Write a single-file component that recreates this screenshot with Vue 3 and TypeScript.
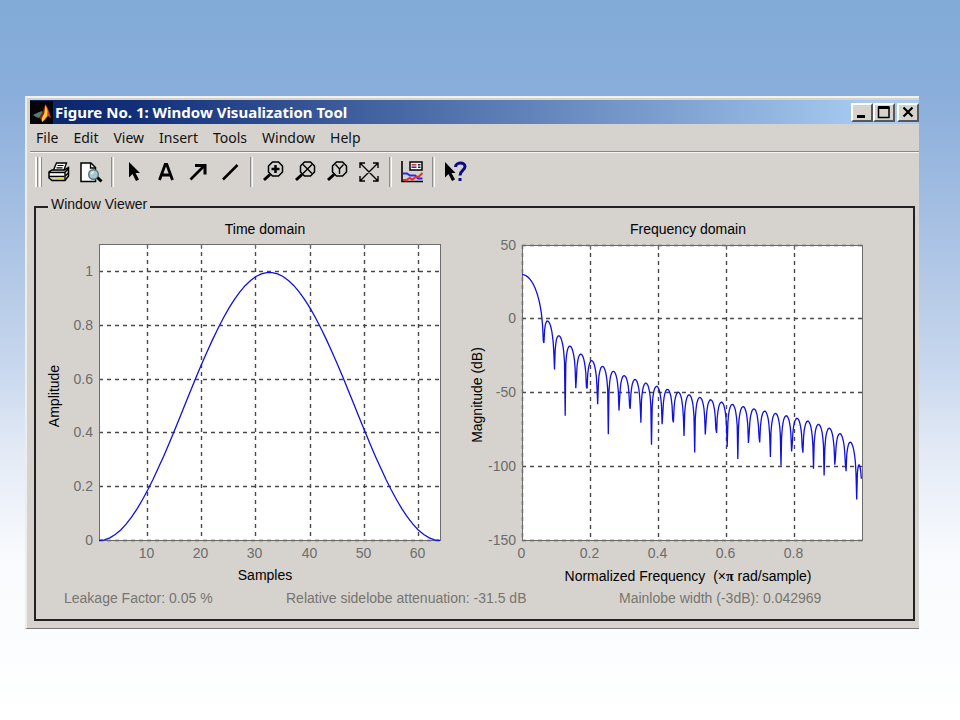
<script setup lang="ts">
interface Tick {
  label: string
  pos: number
}

const menus: string[] = ['File', 'Edit', 'View', 'Insert', 'Tools', 'Window', 'Help']

// Plot frames, in viewBox units
const time = { left: 99, right: 440, top: 244, bottom: 540 }
const freq = { left: 522, right: 862, top: 245, bottom: 540 }

const N = 64
const hann: number[] = Array.from({ length: N }, (_, n) => 0.5 * (1 - Math.cos((2 * Math.PI * n) / (N - 1))))

const timeX = (n: number): number => time.left + ((n - 1) / (N - 1)) * (time.right - time.left)
const timeY = (a: number): number => time.bottom - (a / 1.104) * (time.bottom - time.top)
const freqX = (w: number): number => freq.left + w * (freq.right - freq.left)
const freqY = (db: number): number => freq.top + ((50 - db) / 200) * (freq.bottom - freq.top)

const snap = (v: number): number => Math.floor(v) + 0.5

const timeXTicks: Tick[] = [10, 20, 30, 40, 50, 60].map((n) => ({ label: String(n), pos: snap(timeX(n)) }))
const timeYTicks: Tick[] = [0, 0.2, 0.4, 0.6, 0.8, 1].map((a) => ({ label: String(a), pos: snap(timeY(a)) }))
const freqXTicks: Tick[] = [0, 0.2, 0.4, 0.6, 0.8].map((w) => ({ label: String(w), pos: snap(freqX(w)) }))
const freqYTicks: Tick[] = [50, 0, -50, -100, -150].map((d) => ({ label: String(d), pos: snap(freqY(d)) }))

const timeCurve: string = hann.map((a, i) => `${timeX(i + 1).toFixed(1)},${(timeY(a) + 0.5).toFixed(1)}`).join(' ')

// Magnitude response of the window on 512 points from 0 to pi
const magnitude = (w: number): number => {
  let re = 0
  let im = 0
  hann.forEach((a, n) => {
    re += a * Math.cos(w * n)
    im -= a * Math.sin(w * n)
  })
  return 20 * Math.log10(Math.hypot(re, im))
}
const freqCurve: string = Array.from({ length: 512 }, (_, k) => {
  const w = k / 512
  return `${freqX(w).toFixed(1)},${freqY(magnitude(w * Math.PI)).toFixed(1)}`
}).join(' ')
</script>

<template>
  <main class="slide">
    <section class="window">
      <header class="titlebar">
        <svg class="logo" viewBox="0 0 23 23" aria-hidden="true">
          <rect width="23" height="23" fill="#050505" />
          <path d="M3 14 L8 11.500 L12 10 L13 12 L9 17 L6 16Z" fill="#4d7f78" />
          <path d="M9 17 L12 12 L15 4 L15 14 L12 19Z" fill="#8c1f10" />
          <path d="M15.500 3 L18 8 L21 17 L18 15 L15 19 L12 21 L11 18 L14 13Z" fill="#e2401c" />
          <path d="M15.500 4 L17.500 10 L17 15 L14 19 L12 21 L12 17 L14.500 12Z" fill="#ffd431" />
        </svg>
        <h1>Figure No. 1: Window Visualization Tool</h1>
        <div class="caption-buttons">
          <button type="button" aria-label="Minimize">
            <svg viewBox="0 0 16 14"><path d="M3 11.500h8" stroke="#000" stroke-width="3" /></svg>
          </button>
          <button type="button" aria-label="Maximize">
            <svg viewBox="0 0 16 14"><path d="M2.500 2v10.500h10.500V2" fill="none" stroke="#000" stroke-width="1.500" /><path d="M2 2.500h11.500" stroke="#000" stroke-width="3" /></svg>
          </button>
          <button type="button" class="close" aria-label="Close">
            <svg viewBox="0 0 16 14"><path d="M3.500 2.500l9 9M12.500 2.500l-9 9" stroke="#000" stroke-width="2.200" /></svg>
          </button>
        </div>
      </header>

      <nav class="menubar">
        <button v-for="m in menus" :key="m" type="button">{{ m }}</button>
      </nav>

      <div class="toolbar">
        <span class="grip"></span>
        <span class="grip"></span>
        <button type="button" aria-label="Print">
          <svg viewBox="0 0 24 24">
            <path d="M6.500 10L9.500 3h10L17 10" fill="#fff" stroke="#000" stroke-width="1.400" />
            <path d="M10.500 5.500h6M9.500 7.800h6" stroke="#000" stroke-width="1.200" />
            <path d="M5 10h12.500l4-2.500v8.500L18 20.500H5L2 18v-6z" fill="#d6d3ce" stroke="#000" stroke-width="1.500" />
            <path d="M2 12.500h15.500L21.500 9M17.500 16.500l4-3.500M18 12.500v8" fill="none" stroke="#000" stroke-width="1.300" />
            <path d="M3 14.300h14" stroke="#fff" stroke-width="1.500" />
            <path d="M2 16.500h15.500" stroke="#000" stroke-width="1.300" />
            <path d="M10.500 18.200h5" stroke="#e8dc20" stroke-width="2" />
          </svg>
        </button>
        <button type="button" aria-label="Print preview">
          <svg viewBox="0 0 24 24">
            <path d="M2 3h10l4.500 4.500v14H2z" fill="#fff" stroke="#000" stroke-width="1.500" />
            <path d="M11.500 3v5h5" fill="none" stroke="#000" stroke-width="1.300" />
            <circle cx="14.500" cy="14.500" r="4.800" fill="#a6c8cf" stroke="#5c777c" stroke-width="1.500" />
            <path d="M12 14l2.500-2.500" stroke="#fff" stroke-width="1.500" />
            <path d="M18.500 17.500l4 4" stroke="#000" stroke-width="3" />
          </svg>
        </button>
        <span class="sep"></span>
        <button type="button" aria-label="Select">
          <svg viewBox="0 0 24 24"><path d="M7 2v15.500l3.500-3.500 3.500 7 3-1.500-3.500-6.500h4.500z" fill="#000" /></svg>
        </button>
        <button type="button" aria-label="Insert text">
          <svg viewBox="0 0 24 24"><path d="M5.500 20L11.200 4.500h1.600L18.500 20M7.500 15h9" fill="none" stroke="#000" stroke-width="2.800" /></svg>
        </button>
        <button type="button" aria-label="Insert arrow">
          <svg viewBox="0 0 24 24"><path d="M4.500 19.500L18 6" stroke="#000" stroke-width="2.600" /><path d="M9 5.500h10v9" fill="none" stroke="#000" stroke-width="3" /></svg>
        </button>
        <button type="button" aria-label="Insert line">
          <svg viewBox="0 0 24 24"><path d="M5 19.500L19.500 5" stroke="#000" stroke-width="2.500" /></svg>
        </button>
        <span class="sep"></span>
        <button type="button" aria-label="Zoom in">
          <svg viewBox="0 0 24 24">
            <path d="M11.500 2h6l4 4v6l-4 4h-6l-4-4v-6z" fill="none" stroke="#000" stroke-width="1.500" />
            <path d="M14.500 5v8M10.500 9h8" stroke="#000" stroke-width="2.500" />
            <path d="M9 14.500l-6 5.500" stroke="#000" stroke-width="3" />
          </svg>
        </button>
        <button type="button" aria-label="Zoom X">
          <svg viewBox="0 0 24 24">
            <path d="M11.500 2h6l4 4v6l-4 4h-6l-4-4v-6z" fill="none" stroke="#000" stroke-width="1.500" />
            <path d="M10 4.500l9 9M19 4.500l-9 9" stroke="#000" stroke-width="1.400" />
            <path d="M9 14.500l-6 5.500" stroke="#000" stroke-width="3" />
          </svg>
        </button>
        <button type="button" aria-label="Zoom Y">
          <svg viewBox="0 0 24 24">
            <path d="M11.500 2h6l4 4v6l-4 4h-6l-4-4v-6z" fill="none" stroke="#000" stroke-width="1.500" />
            <path d="M10.500 4.500l4 4.500 4-4.500M14.500 9v5" fill="none" stroke="#000" stroke-width="1.400" />
            <path d="M9 14.500l-6 5.500" stroke="#000" stroke-width="3" />
          </svg>
        </button>
        <button type="button" aria-label="Full view">
          <svg viewBox="0 0 24 24"><path d="M3.500 3.500l17 17M20.500 3.500l-17 17M3 8V3h5M16 3h5v5M3 16v5h5M16 21h5v-5" fill="none" stroke="#000" stroke-width="1.400" /></svg>
        </button>
        <span class="sep"></span>
        <button type="button" aria-label="Legend">
          <svg viewBox="0 0 24 24">
            <path d="M2 1v20.500h21" fill="none" stroke="#000" stroke-width="1.600" />
            <rect x="10" y="2" width="12" height="8" fill="#fff" stroke="#000" stroke-width="1.500" />
            <path d="M11.500 4.800h5" stroke="#e02020" stroke-width="1.500" />
            <path d="M11.500 7.200h5" stroke="#2020e0" stroke-width="1.500" />
            <path d="M18 4.800h2.500M18 7.200h2.500" stroke="#222" stroke-width="1.500" />
            <path d="M3 13.500h4l3 2h5l3 3h4.500" fill="none" stroke="#1f2bff" stroke-width="2" />
            <path d="M3 20h3.500l3-2 3 1.500 4-3 2 .500 4-4" fill="none" stroke="#f02a2a" stroke-width="2" />
          </svg>
        </button>
        <span class="sep"></span>
        <button type="button" aria-label="Context help">
          <svg viewBox="0 0 24 24">
            <path d="M2 2v15.500l3.500-3.500 3.500 7 3-1.500L8.500 13h4z" fill="#000" />
            <path d="M12.500 7c0-5 9.500-5.500 9.500-.500 0 4-5 4-5 9" fill="none" stroke="#0b0b86" stroke-width="3" />
            <path d="M15.500 18h3v3h-3z" fill="#0b0b86" />
          </svg>
        </button>
      </div>

      <fieldset class="viewer">
        <legend>Window Viewer</legend>
        <div class="charts">
          <svg class="chart" viewBox="36 218 434 369" role="img" aria-label="Time domain">
            <rect :x="time.left" :y="time.top" :width="time.right - time.left" :height="time.bottom - time.top" class="plot" />
            <text x="265" y="234" class="name">Time domain</text>
            <g v-for="t in timeXTicks" :key="'x' + t.label">
              <line :x1="t.pos" :x2="t.pos" :y1="time.top" :y2="time.bottom" class="grid" />
              <line :x1="t.pos" :x2="t.pos" :y1="time.top" :y2="time.top + 5" class="frame" />
              <text :x="t.pos - 1" y="558" class="tick">{{ t.label }}</text>
            </g>
            <g v-for="t in timeYTicks" :key="'y' + t.label">
              <line :x1="time.left" :x2="time.right" :y1="t.pos" :y2="t.pos" class="grid" />
              <text x="93" :y="t.pos + 4" class="tick end">{{ t.label }}</text>
            </g>
            <rect :x="time.left + 0.5" :y="time.top + 0.5" :width="time.right - time.left" :height="time.bottom - time.top" class="frame" />
            <polyline :points="timeCurve" class="curve" />
            <text x="265" y="580" class="name">Samples</text>
            <text transform="translate(59 396) rotate(-90)" class="name">Amplitude</text>
          </svg>

          <svg class="chart" viewBox="470 218 443 369" role="img" aria-label="Frequency domain">
            <rect :x="freq.left" :y="freq.top" :width="freq.right - freq.left" :height="freq.bottom - freq.top" class="plot" />
            <text x="688" y="234" class="name">Frequency domain</text>
            <g v-for="t in freqXTicks" :key="'x' + t.label">
              <line :x1="t.pos" :x2="t.pos" :y1="freq.top" :y2="freq.bottom" class="grid" />
              <line :x1="t.pos" :x2="t.pos" :y1="freq.top" :y2="freq.top + 5" class="frame" />
              <text :x="t.pos - 1" y="558" class="tick">{{ t.label }}</text>
            </g>
            <g v-for="t in freqYTicks" :key="'y' + t.label">
              <line :x1="freq.left" :x2="freq.right" :y1="t.pos" :y2="t.pos" class="grid" />
              <text x="516" :y="t.pos + 4" class="tick end">{{ t.label }}</text>
            </g>
            <rect :x="freq.left + 0.5" :y="freq.top + 0.5" :width="freq.right - freq.left" :height="freq.bottom - freq.top" class="frame" />
            <polyline :points="freqCurve" class="curve" />
            <text x="688" y="581" class="name">Normalized Frequency&nbsp; (×<tspan class="pi">π</tspan> rad/sample)</text>
            <text transform="translate(482 395) rotate(-90)" class="name">Magnitude (dB)</text>
          </svg>
        </div>
        <div class="readings">
          <span>Leakage Factor: 0.05 %</span>
          <span>Relative sidelobe attenuation: -31.5 dB</span>
          <span>Mainlobe width (-3dB): 0.042969</span>
        </div>
      </fieldset>
    </section>
  </main>
</template>

<style>
body {
  margin: 0;
}
</style>

<style scoped>
.slide {
  box-sizing: border-box;
  min-height: 100vh;
  padding: 96px 41px 48px 25px;
  background: linear-gradient(#82abd8 0%, #8aaedb 13%, #a5bfe2 30%, #c6d6ed 50%, #e4ebf6 63%, #f8fafd 77%, #ffffff 100%);
  font-family: "Liberation Sans", Arial, sans-serif;
  font-size: 14px;
  color: #111;
}
.window {
  box-sizing: border-box;
  padding: 2px 0 7px 3px;
  background: #d6d3ce;
  border: solid;
  border-width: 2px 0 1px 2px;
  border-color: #f2f1ee #d6d3ce #77777a #efedea;
}
.titlebar {
  display: flex;
  align-items: center;
  height: 24px;
  background: linear-gradient(90deg, #0a246a 0%, #12307a 12%, #a6caf0 94%);
}
.logo {
  width: 23px;
  height: 23px;
}
h1 {
  flex: 1;
  margin: 0 0 0 2px;
  font: bold 15px/24px "Noto Sans", Tahoma, sans-serif;
  color: #fff;
  white-space: nowrap;
}
.caption-buttons {
  display: flex;
}
.caption-buttons button {
  box-sizing: border-box;
  width: 22px;
  height: 19px;
  padding: 0 1px;
  background: #d6d3ce;
  border: 2px solid;
  border-color: #fff #55595f #55595f #fff;
}
.caption-buttons svg {
  display: block;
  width: 16px;
  height: 14px;
}
.caption-buttons .close {
  margin-left: 2px;
}
.menubar {
  display: flex;
  gap: 15px;
  height: 27px;
  padding-left: 6px;
  border-bottom: 1px solid #8a8886;
  box-shadow: 0 1px 0 #f6f5f3;
}
.menubar button {
  padding: 0;
  border: 0;
  background: none;
  font: 14px/26px "Noto Sans", Tahoma, sans-serif;
  color: #111;
}
.toolbar {
  display: flex;
  align-items: center;
  height: 32px;
  padding: 4px 0 0 5px;
}
.toolbar button {
  width: 32px;
  height: 32px;
  padding: 4px;
  border: 0;
  background: none;
}
.toolbar svg {
  display: block;
  width: 24px;
  height: 24px;
}
.grip {
  width: 2px;
  height: 30px;
  margin-right: 1px;
  background: #fafafa;
  border-right: 1px solid #8f8d8a;
}
.sep {
  width: 1px;
  height: 30px;
  margin: 0 4px;
  border-left: 1px solid #8f8d8a;
  border-right: 1px solid #fafafa;
}
.viewer {
  min-width: 0;
  margin: 8px 4px 0 4px;
  padding: 0;
  border: 2px solid #222;
}
.viewer legend {
  margin-left: 12px;
  padding: 0 3px 6px;
  line-height: 16px;
}
.charts {
  display: grid;
  grid-template-columns: 434fr 443fr;
}
.chart {
  display: block;
  width: 100%;
}
.plot {
  fill: #fff;
}
.frame {
  fill: none;
  stroke: #6c6c6c;
}
.grid {
  stroke: #4a4a4a;
  stroke-width: 1.4;
  stroke-dasharray: 4 4;
}
.curve {
  fill: none;
  stroke: #1010e0;
  stroke-width: 1.3;
}
.name {
  fill: #000;
  text-anchor: middle;
}
.tick {
  fill: #6c6c6c;
  text-anchor: middle;
}
.end {
  text-anchor: end;
}
.pi {
  font-family: "Liberation Serif", serif;
  font-weight: bold;
}
.readings {
  display: grid;
  grid-template-columns: 222fr 333fr 294fr;
  padding: 3px 0 13px 28px;
  line-height: 16px;
  color: #77756f;
  white-space: nowrap;
}
</style>
